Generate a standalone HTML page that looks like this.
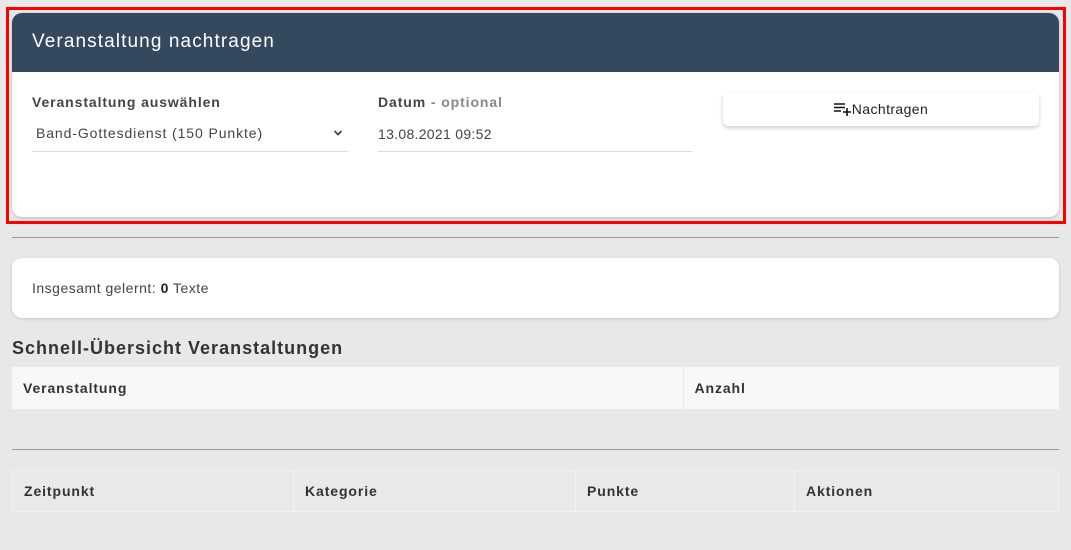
<!DOCTYPE html>
<html><head><meta charset="utf-8"><style>
*{box-sizing:border-box;margin:0;padding:0}
body{width:1071px;height:550px;background:#e8e8e8;font-family:"Liberation Sans",sans-serif;color:#333;position:relative;overflow:hidden;letter-spacing:.9px}
.abs{position:absolute}
.red{left:6px;top:7px;width:1060px;height:217px;border:3px solid #f00}
.card{left:12px;top:13px;width:1047px;height:204px;background:#fff;border-radius:10px;overflow:hidden;box-shadow:0 1px 3px rgba(0,0,0,.2)}
.hdr{height:59px;background:#34495e;color:#fff;font-size:19px;padding:18px 0 0 20px;letter-spacing:1.1px}
.lbl{font-size:14px;font-weight:bold;color:#444}
.val{font-size:14px;color:#444}
.line{height:1px;background:#ddd}
.btn{left:723px;top:92px;width:316px;height:34px;background:#fff;border-radius:5px;box-shadow:0 2px 4px rgba(0,0,0,.2);font-size:14px;color:#222;text-align:center;line-height:34px;letter-spacing:.4px}
.hr{height:1px;background:#999}
th{font-size:14px;font-weight:bold;color:#333;text-align:left;padding-left:11px}
</style></head><body>
<div class="abs card">
<div class="hdr">Veranstaltung nachtragen</div>
</div>
<div class="abs lbl" style="left:32px;top:94px">Veranstaltung auswählen</div>
<div class="abs val" style="left:36px;top:125px">Band-Gottesdienst (150 Punkte)</div>
<svg class="abs" style="left:333px;top:129px" width="10" height="8" viewBox="0 0 10 8"><path d="M1.5 2l3.5 3.5L8.5 2" stroke="#444" stroke-width="1.8" fill="none"/></svg>
<div class="abs line" style="left:32px;top:151px;width:316px"></div>
<div class="abs lbl" style="left:378px;top:94px">Datum <span style="color:#888">- optional</span></div>
<div class="abs val" style="left:378px;top:126px;letter-spacing:.3px">13.08.2021 09:52</div>
<div class="abs line" style="left:378px;top:151px;width:315px"></div>
<div class="abs btn"><svg width="18" height="14" viewBox="0 0 18 14" style="vertical-align:-2px"><path d="M0 2h11M0 5.5h11M0 9h7M9 10h8M13 6v8" stroke="#111" stroke-width="1.6" fill="none"/></svg>Nachtragen</div>
<div class="abs red"></div>
<div class="abs hr" style="left:12px;top:237px;width:1047px"></div>
<div class="abs" style="left:12px;top:258px;width:1047px;height:60px;background:#fff;border-radius:10px;box-shadow:0 1px 3px rgba(0,0,0,.15);font-size:14px;color:#444;padding:22px 0 0 20px;letter-spacing:.5px">Insgesamt gelernt: <b style="color:#222">0</b> Texte</div>
<div class="abs" style="left:12px;top:338px;font-size:18px;font-weight:bold;color:#333;letter-spacing:1px">Schnell-Übersicht Veranstaltungen</div>
<table class="abs" style="left:12px;top:367px;width:1047px;height:42px;border-collapse:collapse;background:#f8f8f8"><tr><th style="width:671px;border-right:1px solid #e6e6e6">Veranstaltung</th><th>Anzahl</th></tr></table>
<div class="abs hr" style="left:12px;top:449px;width:1047px"></div>
<table class="abs" style="left:12px;top:470px;width:1047px;height:42px;border-collapse:collapse;background:#e9e9e9"><tr>
<th style="width:281px;border:1px solid #f2f2f2">Zeitpunkt</th><th style="width:282px;border:1px solid #f2f2f2">Kategorie</th><th style="width:219px;border:1px solid #f2f2f2">Punkte</th><th style="border:1px solid #f2f2f2">Aktionen</th></tr></table>
</body></html>
